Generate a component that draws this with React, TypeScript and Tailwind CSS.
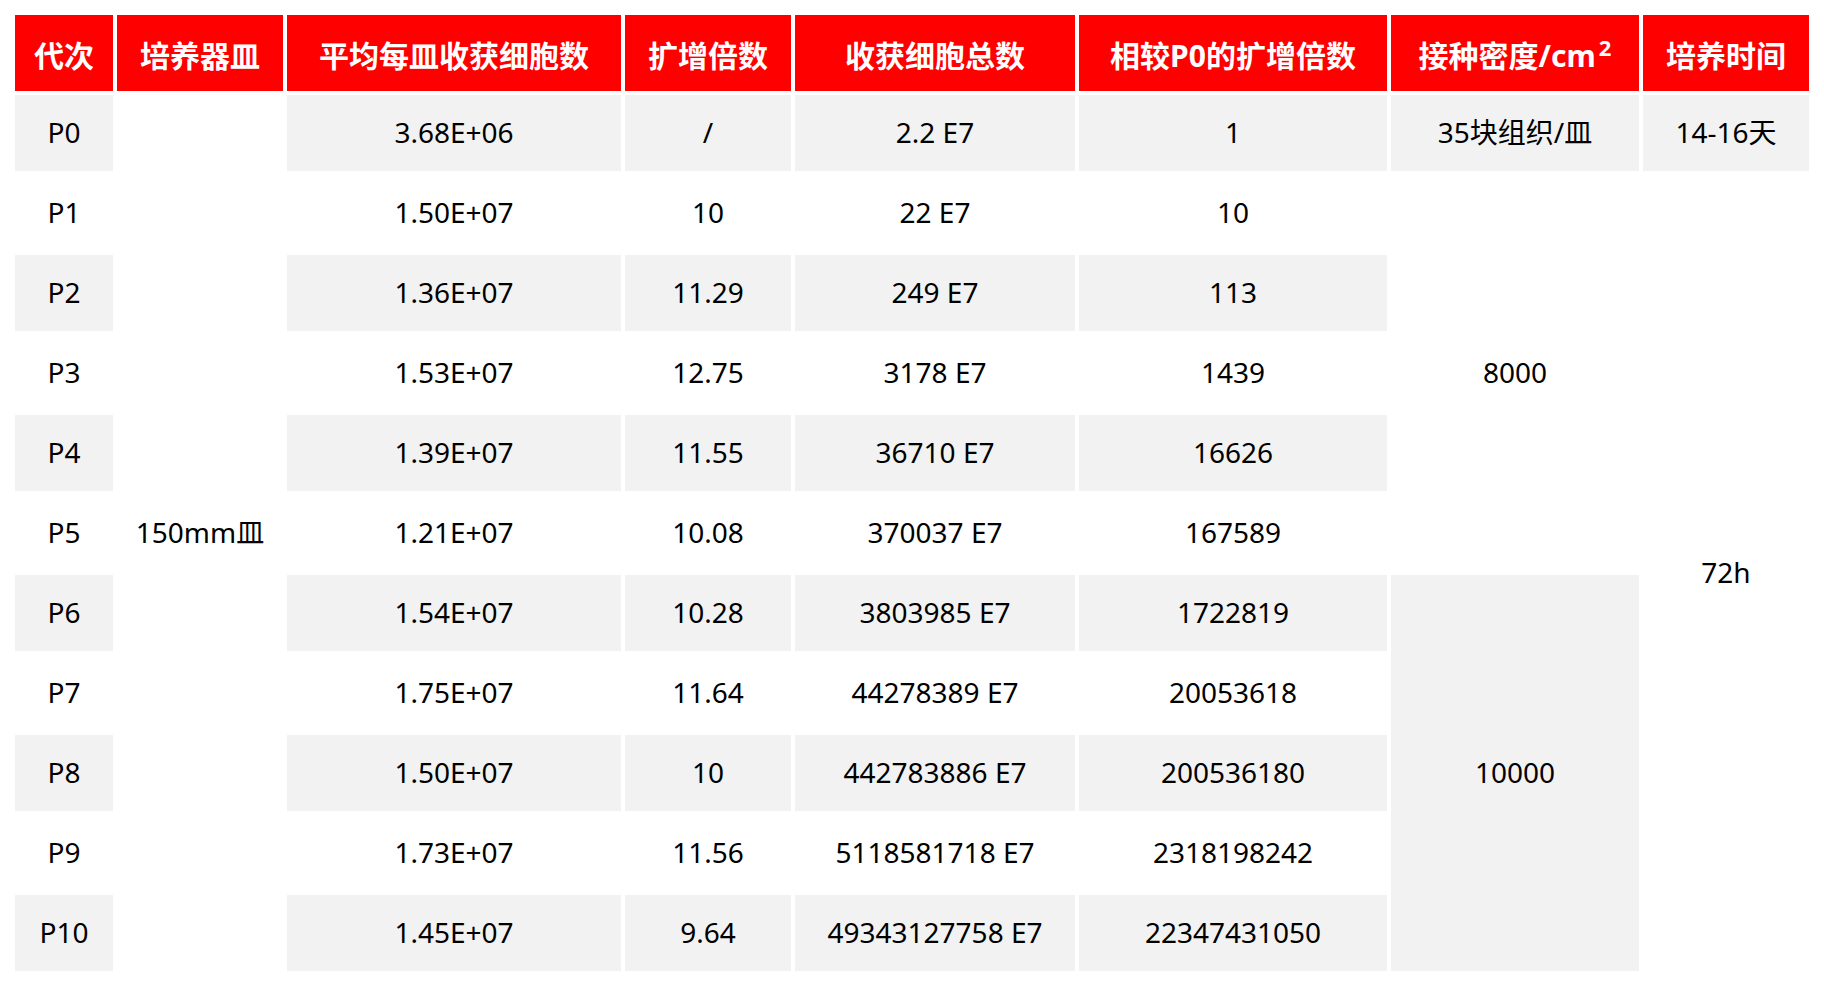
import React from 'react';

const headers = ['代次', '培养器皿', '平均每皿收获细胞数', '扩增倍数', '收获细胞总数', '相较P0的扩增倍数'];

const rows = [
  ['P1', '1.50E+07', '10', '22 E7', '10'],
  ['P2', '1.36E+07', '11.29', '249 E7', '113'],
  ['P3', '1.53E+07', '12.75', '3178 E7', '1439'],
  ['P4', '1.39E+07', '11.55', '36710 E7', '16626'],
  ['P5', '1.21E+07', '10.08', '370037 E7', '167589'],
  ['P6', '1.54E+07', '10.28', '3803985 E7', '1722819'],
  ['P7', '1.75E+07', '11.64', '44278389 E7', '20053618'],
  ['P8', '1.50E+07', '10', '442783886 E7', '200536180'],
  ['P9', '1.73E+07', '11.56', '5118581718 E7', '2318198242'],
  ['P10', '1.45E+07', '9.64', '49343127758 E7', '22347431050'],
];

const Head = ({ children }: { children: React.ReactNode }) => (
  <div className="bg-[#ff0000] text-white font-bold text-[30px] pt-[4px] flex items-center justify-center">
    {children}
  </div>
);

const Cell = ({ gray, className = '', children }: { gray?: boolean; className?: string; children?: React.ReactNode }) => (
  <div className={`flex items-center justify-center text-black text-[28px] pb-[2px] ${gray ? 'bg-[#f2f2f2]' : ''} ${className}`}>
    {children}
  </div>
);

export default function App() {
  return (
    <div
      className="w-[1824px] h-[986px] bg-white p-[15px]"
      style={{ fontFamily: '"Noto Sans", "Noto Sans CJK SC", sans-serif' }}>
      <div className="grid grid-cols-[98px_166px_334px_166px_280px_308px_248px_166px] auto-rows-[76px] gap-[4px]">
        {headers.map((h) => (
          <Head key={h}>{h}</Head>
        ))}
        <Head>
          接种密度/cm<sup className="text-[22px] relative -top-[8px] ml-[3px]">2</sup>
        </Head>
        <Head>培养时间</Head>

        <Cell gray>P0</Cell>
        <Cell className="row-span-11">150mm皿</Cell>
        <Cell gray>3.68E+06</Cell>
        <Cell gray>/</Cell>
        <Cell gray>2.2 E7</Cell>
        <Cell gray>1</Cell>
        <Cell gray>35块组织/皿</Cell>
        <Cell gray>14-16天</Cell>

        {rows.map((r, i) => {
          const gray = i % 2 === 1;
          return (
            <React.Fragment key={r[0]}>
              <Cell gray={gray}>{r[0]}</Cell>
              <Cell gray={gray}>{r[1]}</Cell>
              <Cell gray={gray}>{r[2]}</Cell>
              <Cell gray={gray}>{r[3]}</Cell>
              <Cell gray={gray}>{r[4]}</Cell>
              {i === 0 && <Cell className="row-span-5">8000</Cell>}
              {i === 0 && <Cell className="row-span-10">72h</Cell>}
              {i === 5 && (
                <Cell gray className="row-span-5">
                  10000
                </Cell>
              )}
            </React.Fragment>
          );
        })}
      </div>
    </div>
  );
}
